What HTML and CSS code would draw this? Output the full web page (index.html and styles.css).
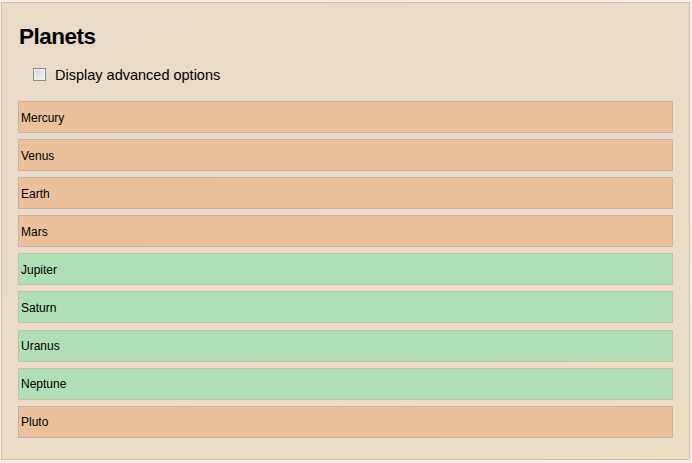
FILE: index.html
```
<!DOCTYPE html>
<html>
<head>
<meta charset="utf-8">
<link rel="stylesheet" href="styles.css">
</head>
<body>
<div class="panel">
  <h1 class="title">Planets</h1>
  <label class="option"><input type="checkbox" class="check"><span>Display advanced options</span></label>
  <div class="list">
    <div class="row rocky">Mercury</div>
    <div class="row rocky">Venus</div>
    <div class="row rocky">Earth</div>
    <div class="row rocky">Mars</div>
    <div class="row giant">Jupiter</div>
    <div class="row giant">Saturn</div>
    <div class="row giant">Uranus</div>
    <div class="row giant">Neptune</div>
    <div class="row rocky">Pluto</div>
  </div>
</div>
</body>
</html>
```
FILE: styles.css
```
html, body {
  margin: 0;
  background: #f9ede7;
}
body {
  padding: 2px 2px 2px 1px;
  font-family: "Liberation Sans", Arial, sans-serif;
  color: #000;
}
.panel {
  box-sizing: border-box;
  width: 689px;
  border: 1px solid #d5bdb4;
  background: linear-gradient(160deg, #e8dbc7 0%, #eadcc6 60%, #ecdfc4 100%);
  padding: 20px 16px 21px 16px;
}
.title {
  margin: 0;
  padding-left: 1px;
  font-size: 22.5px;
  line-height: 28px;
  letter-spacing: -0.5px;
  font-weight: bold;
}
.option {
  display: flex;
  align-items: center;
  margin: 15px 0 0 15px;
  height: 17px;
  font-size: 14.5px;
  line-height: 17px;
}
.option span {
  padding-top: 2px;
}
.check {
  appearance: none;
  -webkit-appearance: none;
  margin: 0 9px 0 0;
  width: 13px;
  height: 13px;
  box-sizing: border-box;
  border: 1px solid #8e8e8e;
  background: linear-gradient(135deg, #d8d8d8 0%, #f4f4f4 100%);
  box-shadow: inset 0 0 0 1px #f0f0f0;
}
.list {
  display: flex;
  flex-direction: column;
  gap: 6.1px;
  margin-top: 18px;
}
.row {
  box-sizing: border-box;
  height: 32px;
  border: 1px solid #c6b3a8;
  padding: 1px 0 0 2px;
  display: flex;
  align-items: center;
  font-size: 12px;
}
.rocky {
  background: #ebc09a;
}
.giant {
  background: #afdeb7;
  border-color: #c0c0b0;
}
```
